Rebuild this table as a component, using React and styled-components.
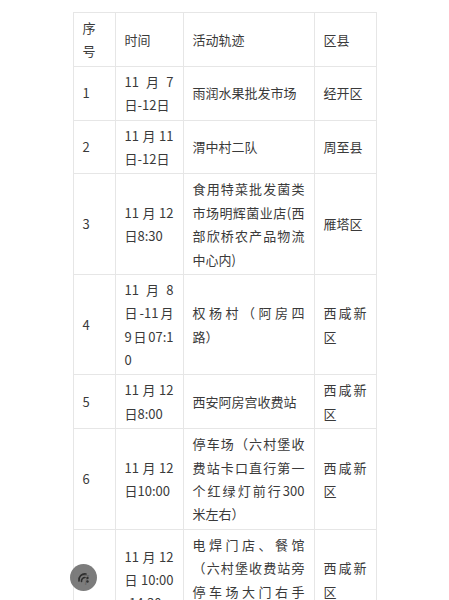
import React from "react";
import styled, { createGlobalStyle } from "styled-components";

const GlobalStyle = createGlobalStyle`
  html, body {
    margin: 0;
    padding: 0;
    background: #ffffff;
    overflow: hidden;
  }
  body {
    font-family: "Noto Sans CJK SC", "Noto Sans", sans-serif;
  }
`;

const Page = styled.div`
  display: flex;
  justify-content: center;
  padding-top: 12px;
  min-height: 600px;
  box-sizing: border-box;
`;

const Table = styled.table`
  width: 303px;
  table-layout: fixed;
  border-collapse: collapse;
  font-size: 13px;
  line-height: 1.8;
  color: #3a3a3a;
`;

const Column = styled.col`
  width: ${(props) => props.$w}px;
`;

const Cell = styled.td`
  border: 1px solid #e6e6e6;
  padding: 3px 9px;
  vertical-align: middle;
  text-align: left;
  word-break: break-all;
`;

// one rendered line of a cell; non-final lines are stretched edge to edge
const Line = styled.div`
  white-space: nowrap;
  text-align: left;
  text-align-last: ${(props) => (props.$fill ? "justify" : "left")};
`;

const FloatButton = styled.div`
  position: fixed;
  left: 70px;
  top: 564px;
  width: 27px;
  height: 27px;
  border-radius: 50%;
  background: rgba(110, 110, 110, 0.9);
  display: flex;
  align-items: center;
  justify-content: center;
`;

const widths = [42, 68, 131, 62];

const header = [["序", "号"], ["时间"], ["活动轨迹"], ["区县"]];

const rows = [
  [["1"], ["11月7", "日-12日"], ["雨润水果批发市场"], ["经开区"]],
  [["2"], ["11月11", "日-12日"], ["渭中村二队"], ["周至县"]],
  [
    ["3"],
    ["11月12", "日8:30"],
    ["食用特菜批发菌类", "市场明辉菌业店(西", "部欣桥农产品物流", "中心内)"],
    ["雁塔区"],
  ],
  [["4"], ["11月8", "日-11月", "9日07:1", "0"], ["权杨村（阿房四", "路）"], ["西咸新", "区"]],
  [["5"], ["11月12", "日8:00"], ["西安阿房宫收费站"], ["西咸新", "区"]],
  [
    ["6"],
    ["11月12", "日10:00"],
    ["停车场（六村堡收", "费站卡口直行第一", "个红绿灯前行300", "米左右）"],
    ["西咸新", "区"],
  ],
  [
    ["7"],
    ["11月12", "日 10:00", "-14:30"],
    ["电焊门店、餐馆", "（六村堡收费站旁", "停车场大门右手", "边）"],
    ["西咸新", "区"],
  ],
];

const CellLines = ({ lines, noFill }) =>
  lines.map((text, i) => (
    <Line key={i} $fill={!noFill && i < lines.length - 1}>
      {text}
    </Line>
  ));

export default function App() {
  return (
    <>
      <GlobalStyle />
      <Page>
        <Table>
          <colgroup>
            {widths.map((w, i) => (
              <Column key={i} $w={w} />
            ))}
          </colgroup>
          <tbody>
            <tr>
              {header.map((lines, i) => (
                <Cell key={i}>
                  <CellLines lines={lines} noFill />
                </Cell>
              ))}
            </tr>
            {rows.map((row, r) => (
              <tr key={r}>
                {row.map((lines, c) => (
                  <Cell key={c}>
                    <CellLines lines={lines} />
                  </Cell>
                ))}
              </tr>
            ))}
          </tbody>
        </Table>
      </Page>
      <FloatButton>
        <svg width="14" height="14" viewBox="0 0 14 14" fill="none">
          <path d="M2 10 A6 6 0 0 1 9 3" stroke="#2e2e2e" strokeWidth="1.6" strokeLinecap="round" />
          <path d="M4.5 10.5 A3.5 3.5 0 0 1 8 6.5" stroke="#2e2e2e" strokeWidth="1.6" strokeLinecap="round" />
          <circle cx="10.5" cy="7" r="1.2" fill="#2e2e2e" />
          <circle cx="10.5" cy="10.5" r="1.2" fill="#2e2e2e" />
        </svg>
      </FloatButton>
    </>
  );
}
